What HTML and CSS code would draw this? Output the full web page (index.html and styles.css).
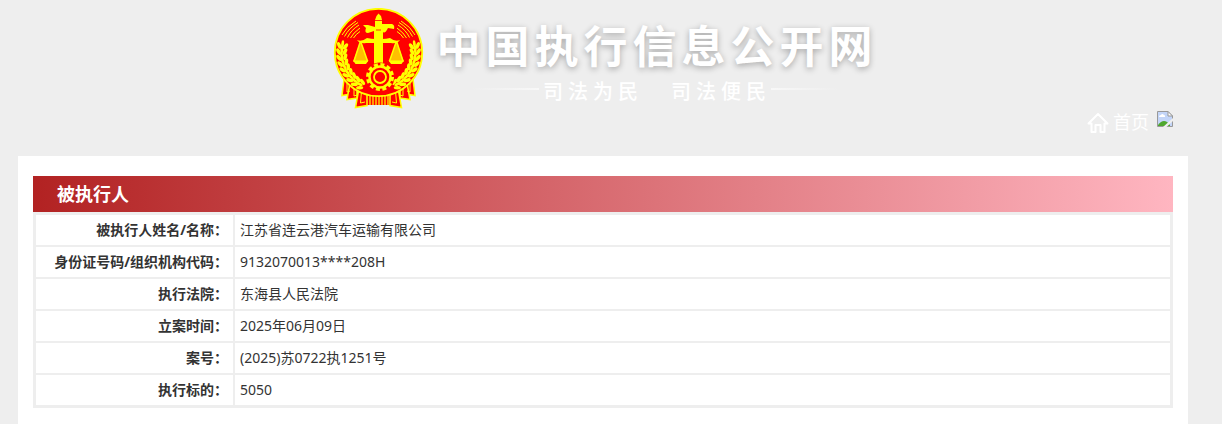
FILE: index.html
```html
<!DOCTYPE html>
<html lang="zh-CN">
<head>
    <meta charset="UTF-8">
    <meta name="viewport" content="width=device-width, initial-scale=1.0">
    <title>中国执行信息公开网</title>
    <link rel="stylesheet" href="styles.css">
</head>
<body>
    <header class="header">
        <div class="brand">
            <svg class="emblem" viewBox="7 7 92 101" aria-hidden="true">
                <defs>
                    <g id="grain" fill="#ff0">
                        <ellipse cx="12.6" cy="50" rx="1.8" ry="3.6" transform="rotate(-28 12.6 50)"/>
                        <ellipse cx="15.8" cy="48" rx="1.4" ry="3.6"/>
                        <ellipse cx="19" cy="50" rx="1.8" ry="3.6" transform="rotate(28 19 50)"/>
                    </g>
                    <g id="side">
                        <use href="#grain" transform="rotate(8 52.5 51.5)"/>
                        <use href="#grain" transform="rotate(-1 52.5 51.5)"/>
                        <use href="#grain" transform="rotate(-10 52.5 51.5)"/>
                        <use href="#grain" transform="rotate(-19 52.5 51.5)"/>
                        <use href="#grain" transform="rotate(-28 52.5 51.5)"/>
                        <use href="#grain" transform="rotate(-37 52.5 51.5)"/>
                        <use href="#grain" transform="rotate(-46 52.5 51.5)"/>
                        <use href="#grain" transform="rotate(-55 52.5 51.5)"/>
                        <use href="#grain" transform="rotate(-64 52.5 51.5)"/>
                        <path d="M16 34Q20 26 30 20M18.5 35.500Q23 27 32 21.500M21.500 36.500Q25 29 33 24M24.500 37Q27 32 34 27M27.500 37Q30 33 34 30.500" fill="none" stroke="#ff0" stroke-width="1"/>
                        <path d="M34.500 40L27 61H42Z" fill="#ff0" opacity=".75"/>
                        <path d="M34.500 40L28 60M34.500 40L41.500 60" fill="none" stroke="#ff0" stroke-width="1.5"/>
                        <path d="M27 59.500H42.500L40 63H29.500Z" fill="#ff0"/>
                    </g>
                    <g id="ribbon" stroke="#ff0" stroke-width="1.500">
                        <path d="M18 78L16 94.500L25 93V82Z" fill="#f00"/>
                        <path d="M24 82L21 98.500L31 97V86Z" fill="#f00"/>
                        <path d="M33 87L29.500 106.500L41 104.500V90Z" fill="#f00"/>
                        <path d="M21 80V91L24 90M28 85V95L31 94M35.500 90L34.500 102L39 101" fill="none" stroke-width="1"/>
                    </g>
                </defs>
                <path d="M34 90H71L69 104H37Z" fill="#f00"/>
                <path d="M44 94V104M47 94V104M50 94V104M53 94V104M56 94V104M59 94V104M62 94V104" fill="none" stroke="#ff0" stroke-width="1.200"/>
                <use href="#ribbon"/>
                <use href="#ribbon" transform="translate(105 0) scale(-1 1)"/>
                <circle cx="52.500" cy="51.500" r="43.700" fill="#f00" stroke="#ff0" stroke-width="1.800"/>
                <use href="#side"/>
                <use href="#side" transform="translate(105 0) scale(-1 1)"/>
                <path d="M31 39Q36 41 41 37Q46 38 49 38H56Q60 38 64 37Q69 41 74 39Q71 43 65 42H40Q34 43 31 39Z" fill="#ff0"/>
                <path d="M49 19L50.500 15L52.500 12.500L55 15L56 19V23H66Q69 24 68 28L62 27Q59 33 57 31V66H48V30L42 32Q38 32 40 27L37 24L42 24L49 26V19Z" fill="#ff0"/>
                <path d="M49 19.500H56M50 29H55" stroke="#f00" stroke-width=".8"/>
                <circle cx="54" cy="76" r="14.500" fill="#f00"/>
                <circle cx="54" cy="76" r="12.500" fill="none" stroke="#ff0" stroke-width="3" stroke-dasharray="4 2.545"/>
                <circle cx="54" cy="76" r="10.500" fill="none" stroke="#ff0" stroke-width="2.400"/>
                <circle cx="54" cy="76" r="6" fill="none" stroke="#ff0" stroke-width="1.800"/>
            </svg>
            <div class="brand-text">
                <h1 class="site-title">中国执行信息公开网</h1>
                <p class="slogan"><span>司法为民</span><span>司法便民</span></p>
            </div>
        </div>
        <nav class="nav">
            <a class="home-link" href="#">
                <svg class="home-icon" viewBox="0 0 22 22" aria-hidden="true">
                    <path d="M1.500 11.500L11 2L20.500 11.500H17.500V20H13.500V13H8.500V20H4.500V11.500Z" fill="none" stroke="#fff" stroke-width="2" stroke-linejoin="round"/>
                </svg>
                <span>首页</span>
            </a>
            <svg class="missing-image" viewBox="0 0 16 16" aria-hidden="true">
                <path d="M.5.500H11L15.500 5V15.500H.5Z" fill="#c3d5f8"/>
                <path d="M2 6Q2 4 4 4Q5 2 7 4Q8.500 4 8 6Z" fill="#fff"/>
                <path d="M1 14Q7 6 13 14V15H1Z" fill="#4ea72e"/>
                <path d="M.5 15.500V.5H11L15.500 5V15.500Z" fill="none" stroke="#999"/>
                <path d="M11 .5V5H15.500Z" fill="#fff" stroke="#999"/>
                <path d="M6 16L16 7V10L9.500 16Z" fill="#eee"/>
            </svg>
        </nav>
    </header>

    <main class="panel">
        <h2 class="panel-title">被执行人</h2>
        <table class="info">
            <tr>
                <th scope="row">被执行人姓名/名称：</th>
                <td>江苏省连云港汽车运输有限公司</td>
            </tr>
            <tr>
                <th scope="row">身份证号码/组织机构代码：</th>
                <td>9132070013****208H</td>
            </tr>
            <tr>
                <th scope="row">执行法院：</th>
                <td>东海县人民法院</td>
            </tr>
            <tr>
                <th scope="row">立案时间：</th>
                <td>2025年06月09日</td>
            </tr>
            <tr>
                <th scope="row">案号：</th>
                <td>(2025)苏0722执1251号</td>
            </tr>
            <tr>
                <th scope="row">执行标的：</th>
                <td>5050</td>
            </tr>
        </table>
    </main>
</body>
</html>
```

FILE: styles.css
```css
* {
    box-sizing: border-box;
}

body {
    margin: 0;
    padding: 0 34px 0 18px;
    min-height: 100vh;
    display: flex;
    flex-direction: column;
    background-color: #eee;
    color: #333;
    font-family: "Noto Sans", "Noto Sans CJK SC", sans-serif;
    font-size: 14px;
    line-height: 20px;
}

/* Header */
.header {
    padding: 8px 15px 20px;
}

.brand {
    display: flex;
    justify-content: center;
    gap: 12px;
    padding-left: 4px;
}

.emblem {
    width: 92px;
    height: 101px;
}

.brand-text {
    padding-top: 10px;
    color: #fff;
}

.site-title {
    margin: 0;
    font-size: 44px;
    line-height: 56px;
    letter-spacing: 5px;
    text-shadow: 0 2px 6px rgba(0, 0, 0, 0.3);
}

.slogan {
    display: flex;
    align-items: center;
    justify-content: center;
    gap: 28px;
    margin: 0;
    padding-right: 4px;
    font-family: "Noto Sans CJK SC", sans-serif;
    font-size: 20px;
    font-weight: 500;
    line-height: 34px;
    letter-spacing: 5px;
}

.slogan::before,
.slogan::after {
    content: "";
    width: 68px;
    height: 2px;
    margin: 0 -24px 4px 0;
    background: linear-gradient(to right, transparent, #f8f8f8);
}

.slogan::after {
    margin: 0 0 4px -28px;
    background: linear-gradient(to left, transparent, #f8f8f8);
}

.nav {
    display: flex;
    justify-content: flex-end;
    gap: 8px;
}

.home-link {
    display: flex;
    align-items: center;
    gap: 4px;
    color: #fff;
    font-size: 18px;
    line-height: 27px;
    text-decoration: none;
}

.home-icon {
    width: 22px;
    height: 22px;
}

.missing-image {
    width: 16px;
    height: 16px;
    margin-top: 2px;
}

/* Content */
.panel {
    flex: 1;
    padding: 20px 15px 16px;
    background-color: #fff;
}

.panel-title {
    margin: 0;
    padding-left: 24px;
    background: linear-gradient(to right, #b22222, #ffb6c1);
    color: #fff;
    font-size: 18px;
    line-height: 36px;
}

.info {
    width: 100%;
    border: 1px solid #eee;
    border-spacing: 2px;
    background-color: #eee;
}

.info th,
.info td {
    padding: 5px;
    background-color: #fff;
}

.info th {
    width: 197px;
    text-align: right;
    white-space: nowrap;
}

.info td {
    text-align: left;
}
```
